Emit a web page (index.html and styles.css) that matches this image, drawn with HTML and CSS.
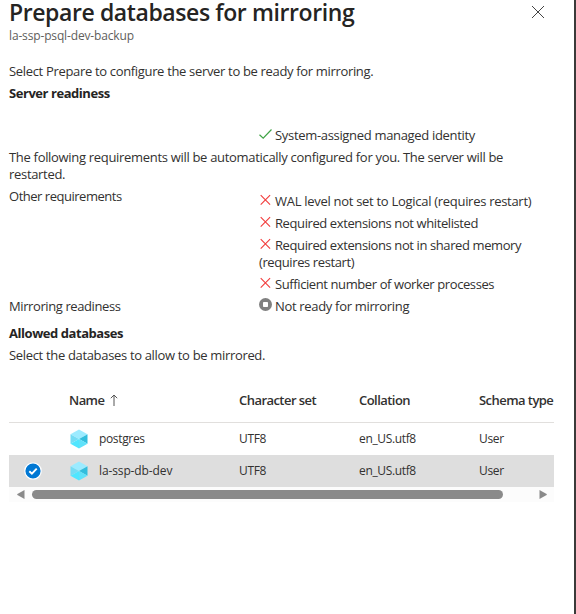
FILE: index.html
```html
<!DOCTYPE html>
<html lang="en">
<head>
    <meta charset="UTF-8">
    <meta name="viewport" content="width=device-width, initial-scale=1.0">
    <title>Prepare databases for mirroring</title>
    <link rel="stylesheet" href="styles.css">
</head>
<body>
    <!-- Shared icons -->
    <svg class="sprite" width="0" height="0">
        <symbol id="cross" viewBox="0 0 13 13">
            <path d="M1.7 1.2l9.4 9.4M11.1 1.2l-9.4 9.4" fill="none" stroke="#f23c3c" stroke-width="1.1"/>
        </symbol>
        <symbol id="cube" viewBox="0 0 18 20">
            <path d="M9 .5L17.5 5.3 9 10 .5 5.3z" fill="#9cebff"/>
            <path d="M.5 5.3L9 10 .5 14.7z" fill="#74dcf4"/>
            <path d="M.5 14.7L9 10v9.5z" fill="#50e6ff"/>
            <path d="M17.5 5.3L9 10l8.5 4.7z" fill="#32bedd"/>
            <path d="M9 10v9.5l8.5-4.8z" fill="#5fe2fa"/>
        </symbol>
    </svg>

    <div class="panel">
        <header class="panel-header">
            <div>
                <h1 class="title">Prepare databases for mirroring</h1>
                <p class="subtitle">la-ssp-psql-dev-backup</p>
            </div>
            <button class="close" aria-label="Close">
                <svg width="14" height="14" viewBox="0 0 14 14"><path d="M1 1l12 12M13 1L1 13" fill="none" stroke="#444" stroke-width="1"/></svg>
            </button>
        </header>

        <!-- Server readiness -->
        <p class="text">Select Prepare to configure the server to be ready for mirroring.</p>
        <h2 class="section-title">Server readiness</h2>

        <div class="row identity">
            <div class="label"></div>
            <div class="value"><p class="identity-text"><svg class="icon" viewBox="0 0 13 13"><path d="M.5 6.7l3.7 3.5L12.5 1.5" fill="none" stroke="#3fa345" stroke-width="1.2"/></svg>System-assigned managed identity</p></div>
        </div>

        <p class="text notice">The following requirements will be automatically configured for you. The server will be restarted.</p>

        <div class="row">
            <div class="label other">Other requirements</div>
            <div class="value requirements">
                <p class="wal"><svg class="icon"><use href="#cross"/></svg>WAL level not set to Logical (requires restart)</p>
                <p><svg class="icon"><use href="#cross"/></svg>Required extensions not whitelisted</p>
                <p><svg class="icon"><use href="#cross"/></svg>Required extensions not in shared memory (requires restart)</p>
                <p><svg class="icon"><use href="#cross"/></svg>Sufficient number of worker processes</p>
            </div>
        </div>

        <div class="row">
            <div class="label">Mirroring readiness</div>
            <div class="value"><p class="ready"><svg class="icon" viewBox="0 0 13 13"><circle cx="6.5" cy="6.5" r="6.5" fill="#808080"/><rect x="4" y="4" width="5" height="5" rx=".7" fill="#fff"/></svg>Not ready for mirroring</p></div>
        </div>

        <!-- Allowed databases -->
        <h2 class="section-title allowed">Allowed databases</h2>
        <p class="text select-text">Select the databases to allow to be mirrored.</p>

        <div class="grid">
            <div class="grid-row grid-head">
                <div></div>
                <div>Name <svg class="sort" width="8" height="12" viewBox="0 0 8 12"><path d="M4 12V1M.8 4.2L4 1l3.2 3.2" fill="none" stroke="#555" stroke-width="1"/></svg></div>
                <div>Character set</div>
                <div>Collation</div>
                <div>Schema type</div>
            </div>
            <div class="grid-row">
                <div></div>
                <div class="name"><svg class="cube"><use href="#cube"/></svg><span>postgres</span></div>
                <div>UTF8</div>
                <div>en_US.utf8</div>
                <div>User</div>
            </div>
            <div class="grid-row selected">
                <div class="mark"><svg width="18" height="18" viewBox="0 0 18 18"><circle cx="9" cy="9" r="8.2" fill="#0078d4" stroke="#fff" stroke-width="1.2"/><path d="M5.3 9.2l2.6 2.5 4.8-5" fill="none" stroke="#fff" stroke-width="1.9"/></svg></div>
                <div class="name"><svg class="cube"><use href="#cube"/></svg><span class="db-dev">la-ssp-db-dev</span></div>
                <div>UTF8</div>
                <div>en_US.utf8</div>
                <div>User</div>
            </div>
            <div class="scrollbar">
                <svg width="8" height="9" viewBox="0 0 8 9"><path d="M7.5 0v9L.4 5.1Q0 4.5.4 3.9z" fill="#8a8a8a"/></svg>
                <div class="track"><div class="thumb"></div></div>
                <svg width="8" height="9" viewBox="0 0 8 9"><path d="M.5 0v9l7.1-3.9q.4-.6 0-1.2z" fill="#8a8a8a"/></svg>
            </div>
        </div>
    </div>
</body>
</html>
```

FILE: styles.css
```css
* {
    margin: 0;
    padding: 0;
    box-sizing: border-box;
}

body {
    background: #fff;
    color: #323130;
    font-family: 'Segoe UI', 'Open Sans', 'Noto Sans', sans-serif;
    font-size: 13px;
    line-height: 17px;
    overflow: hidden;
}

.sprite {
    display: block;
}

.panel {
    width: 576px;
    height: 614px;
    padding: 0 20px 0 9px;
    border-right: 2px solid #3b3a39;
}

/* Header */
.panel-header {
    display: flex;
    justify-content: space-between;
    height: 63px;
}
.title {
    height: 28px;
    font-size: 23px;
    font-weight: 600;
    line-height: 24px;
    letter-spacing: -0.4px;
    white-space: nowrap;
    color: #252423;
}
.subtitle {
    font-size: 12px;
    line-height: 16px;
    letter-spacing: -0.15px;
    color: #605e5c;
}
.close {
    width: 14px;
    height: 14px;
    margin: 5px 9px 0 0;
    border: none;
    background: none;
}
.close svg {
    display: block;
}

/* Readiness form */
.text {
    letter-spacing: -0.33px;
}
.section-title {
    margin-top: 5px;
    font-size: 13px;
    font-weight: 700;
    letter-spacing: -0.45px;
    color: #252423;
}
.row {
    display: flex;
    margin-top: 5px;
}
.identity {
    margin-top: 25px;
}
.notice {
    margin-top: 5px;
    letter-spacing: -0.31px;
}
.label {
    width: 250px;
    letter-spacing: -0.4px;
}
.other {
    letter-spacing: -0.48px;
}
.value {
    flex: 1;
    letter-spacing: -0.4px;
}
.requirements {
    display: flex;
    flex-direction: column;
    gap: 5px;
    padding-top: 5px;
}
.icon {
    width: 13px;
    height: 13px;
    margin-right: 3px;
    vertical-align: -1px;
}
.wal {
    letter-spacing: -0.29px;
}
.identity-text,
.ready {
    letter-spacing: -0.32px;
}
.ready .icon {
    vertical-align: 0;
}
.allowed {
    margin-top: 10px;
}
.select-text {
    margin-top: 5px;
}

/* Database grid */
.grid {
    width: 545px;
    margin-top: 15px;
    overflow: hidden;
}
.grid-row {
    display: grid;
    grid-template-columns: 60px 170px 120px 120px 75px;
    align-items: center;
    height: 32px;
    padding-bottom: 2px;
    font-size: 12px;
    letter-spacing: -0.35px;
    white-space: nowrap;
}
.grid-head {
    height: 44px;
    padding-bottom: 0;
    border-bottom: 1px solid #e1dfdd;
    font-size: 13px;
    font-weight: 600;
    letter-spacing: -0.55px;
}
.sort {
    margin-left: 3px;
    vertical-align: -1px;
}
.selected {
    background: #dedede;
}
.mark {
    padding: 1px 0 0 15px;
}
.mark svg {
    display: block;
}
.name {
    display: flex;
    align-items: center;
}
.db-dev {
    letter-spacing: -0.12px;
}
.cube {
    width: 18px;
    height: 20px;
    margin: 2px 11px 0 1px;
}

/* Horizontal scrollbar */
.scrollbar {
    display: flex;
    align-items: center;
    height: 15px;
    padding: 0 7px 0 8px;
    background: #fcfcfc;
}
.track {
    flex: 1;
    padding: 0 36px 0 7px;
}
.thumb {
    height: 9px;
    border-radius: 5px;
    background: #8a8a8a;
}
```
